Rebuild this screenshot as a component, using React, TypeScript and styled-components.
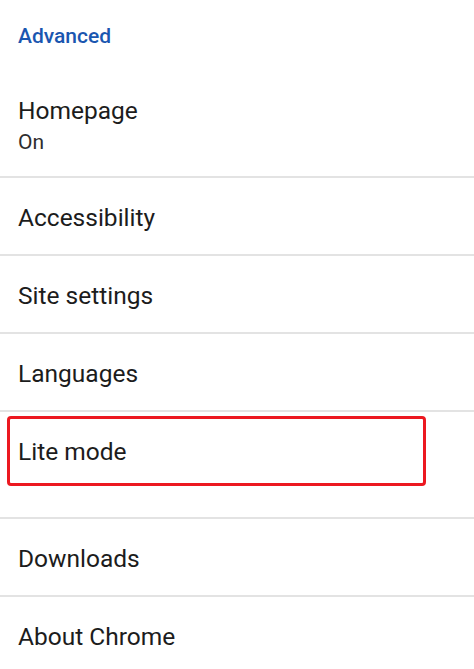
import React from 'react';

import styled, { createGlobalStyle } from 'styled-components';

type Item = {
  title: string;
  summary?: string;
  highlighted?: boolean;
};

const ITEMS: Item[] = [
  { title: 'Homepage', summary: 'On' },
  { title: 'Accessibility' },
  { title: 'Site settings' },
  { title: 'Languages' },
  { title: 'Lite mode', highlighted: true },
  { title: 'Downloads' },
  { title: 'About Chrome' },
];

const App = () => {
  return (
    <Page>
      <GlobalStyle />
      <SectionHeader>Advanced</SectionHeader>
      <List>
        {ITEMS.map((item, i) =>
          item.highlighted ? (
            <HighlightRow key={item.title}>
              <Highlight>
                <Title>{item.title}</Title>
              </Highlight>
            </HighlightRow>
          ) : (
            <Row key={item.title} $first={i === 0}>
              <Title>{item.title}</Title>
              {item.summary && <Summary>{item.summary}</Summary>}
            </Row>
          )
        )}
      </List>
    </Page>
  );
};

const GlobalStyle = createGlobalStyle`
  html, body {
    margin: 0;
    padding: 0;
    background: #ffffff;
  }
  body {
    font-family: Roboto, 'Noto Sans', 'Liberation Sans', sans-serif;
    -webkit-font-smoothing: antialiased;
  }
`;

const Page = styled.div`
  width: 474px;
  height: 669px;
  overflow: hidden;
  background: #ffffff;
`;

const SectionHeader = styled.div`
  padding: 23px 18px 0;
  font-size: 21px;
  line-height: 27px;
  font-weight: 500;
  color: #1a56b0;
`;

const List = styled.div`
  display: flex;
  flex-direction: column;
`;

const Row = styled.div<{ $first?: boolean }>`
  box-sizing: border-box;
  padding: ${({ $first }) => ($first ? '46px 18px 0' : '25px 18px 0')};
  height: ${({ $first }) => ($first ? '128px' : '78px')};
  border-bottom: 2px solid #e3e3e3;
  display: flex;
  flex-direction: column;
`;

const HighlightRow = styled.div`
  box-sizing: border-box;
  height: 107px;
  padding: 4px 48px 0 7px;
  border-bottom: 2px solid #e3e3e3;
`;

const Highlight = styled.div`
  box-sizing: border-box;
  height: 70px;
  padding: 18px 8px 0;
  border: 3px solid #ec1820;
  border-radius: 4px;
`;

const Title = styled.div`
  font-size: 24.5px;
  line-height: 30px;
  color: #1c1c1c;
`;

const Summary = styled.div`
  margin-top: 3px;
  font-size: 21px;
  line-height: 26px;
  color: #2e2e2e;
`;

export default App;
